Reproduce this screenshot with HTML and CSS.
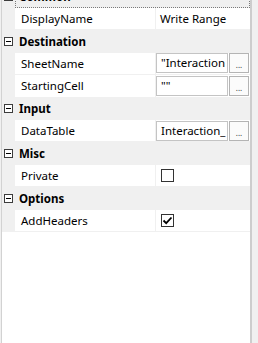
FILE: index.html
```html
<!DOCTYPE html>
<html lang="en">
<head>
  <meta charset="UTF-8">
  <title>Properties</title>
  <link rel="stylesheet" href="styles.css">
</head>
<body>
  <div class="panel">
    <div class="grid">
      <div class="cat selected">
        <span class="gutter"><span class="toggle"></span></span>
        <span class="cat-label">Common</span>
      </div>
      <div class="prop">
        <span class="gutter"></span>
        <span class="name">DisplayName</span>
        <span class="value">Write Range</span>
      </div>

      <div class="cat">
        <span class="gutter"><span class="toggle"></span></span>
        <span class="cat-label">Destination</span>
      </div>
      <div class="prop">
        <span class="gutter"></span>
        <span class="name">SheetName</span>
        <span class="value"><span class="field">"Interaction</span><span class="more">...</span></span>
      </div>
      <div class="prop">
        <span class="gutter"></span>
        <span class="name">StartingCell</span>
        <span class="value"><span class="field">""</span><span class="more">...</span></span>
      </div>

      <div class="cat">
        <span class="gutter"><span class="toggle"></span></span>
        <span class="cat-label">Input</span>
      </div>
      <div class="prop">
        <span class="gutter"></span>
        <span class="name">DataTable</span>
        <span class="value"><span class="field">Interaction_</span><span class="more">...</span></span>
      </div>

      <div class="cat">
        <span class="gutter"><span class="toggle"></span></span>
        <span class="cat-label">Misc</span>
      </div>
      <div class="prop">
        <span class="gutter"></span>
        <span class="name">Private</span>
        <span class="value"><span class="check"></span></span>
      </div>

      <div class="cat">
        <span class="gutter"><span class="toggle"></span></span>
        <span class="cat-label">Options</span>
      </div>
      <div class="prop">
        <span class="gutter"></span>
        <span class="name">AddHeaders</span>
        <span class="value">
          <span class="check">
            <svg width="11" height="11" viewBox="0 0 11 11"><path d="M1.5 5.5 L4.2 8.2 L9.5 2.5" fill="none" stroke="#000" stroke-width="1.8"/></svg>
          </span>
        </span>
      </div>
    </div>
  </div>
</body>
</html>
```

FILE: styles.css
```css
/* Base */
body {
  margin: 0;
  background: #f0f0f0;
  font-family: "Noto Sans", "Open Sans", sans-serif;
  font-size: 11.5px;
  color: #000;
}

.panel {
  width: 248px;
  height: 343px;
  margin-left: 1px;
  background: #fff;
  border-left: 1px solid #d2d2d2;
  border-right: 2px solid #cdcdcd;
  overflow: hidden;
}

/* Grid rows */
.grid {
  margin-top: -14.4px;
}

.cat,
.prop {
  display: flex;
  height: 22.4px;
  box-sizing: border-box;
}

.cat {
  background: #f0f0f0;
  font-weight: bold;
}

.prop {
  border-bottom: 1px solid #f0f0f0;
}

.gutter {
  width: 13px;
  flex: none;
  display: flex;
  align-items: center;
  background: #f0f0f0;
}

.toggle {
  position: relative;
  width: 9px;
  height: 9px;
  margin-left: 2px;
  box-sizing: border-box;
  border: 1px solid #3c3c3c;
  background: #fff;
}

.toggle::after {
  content: "";
  position: absolute;
  left: 1px;
  right: 1px;
  top: 3px;
  height: 1px;
  background: #000;
}

.cat-label {
  flex: 1;
  display: flex;
  align-items: center;
  padding-left: 4px;
}

.selected .cat-label {
  outline: 1px dotted #7a7a7a;
  outline-offset: -1px;
}

.name {
  width: 134px;
  flex: none;
  display: flex;
  align-items: center;
  padding-left: 6px;
  border-right: 1px solid #f0f0f0;
}

.value {
  flex: 1;
  display: flex;
  align-items: center;
  padding-left: 4px;
  white-space: nowrap;
  overflow: hidden;
}

/* Editors */
.field {
  width: 72px;
  height: 20px;
  margin-left: -4px;
  box-sizing: border-box;
  border: 1px solid #c4c4c4;
  padding-left: 4px;
  line-height: 18px;
  overflow: hidden;
  white-space: nowrap;
  flex: none;
}

.more {
  width: 20px;
  height: 20px;
  margin-left: 1px;
  box-sizing: border-box;
  border: 1px solid #b4b4b4;
  background: #fbfbfb;
  font-size: 8px;
  line-height: 22px;
  text-align: center;
  color: #333;
  flex: none;
}

.check {
  width: 13px;
  height: 13px;
  margin-left: 1px;
  box-sizing: border-box;
  border: 1px solid #333;
  background: #fff;
  display: flex;
  align-items: center;
  justify-content: center;
}
```
